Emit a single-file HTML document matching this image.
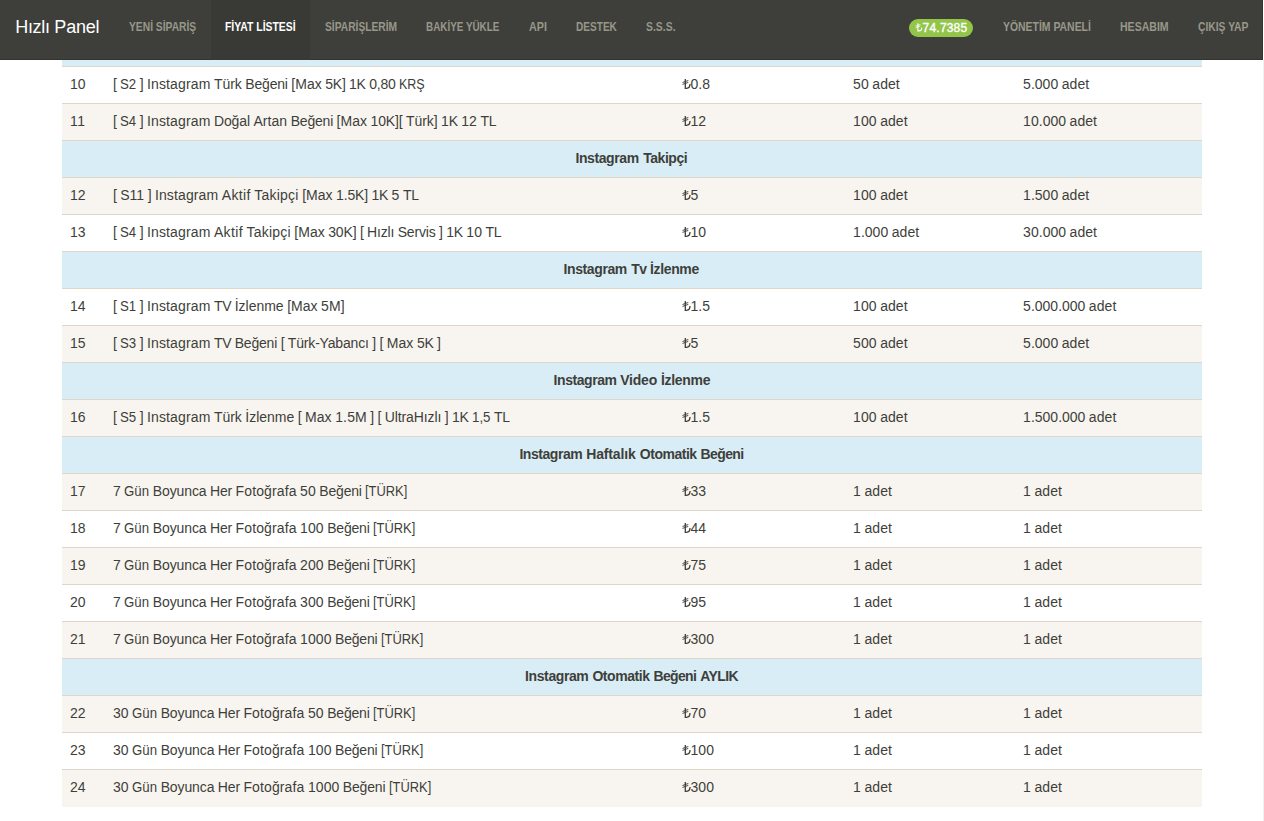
<!DOCTYPE html><html lang="tr"><head><meta charset="utf-8"><title>Fiyat Listesi</title><style>
*{box-sizing:border-box}
html,body{margin:0;padding:0}
body{width:1264px;height:821px;overflow:hidden;background:#fff;font-family:"Liberation Sans",sans-serif;font-size:14px;line-height:20px;color:#3e3f3a;position:relative}
.nav{position:absolute;left:0;top:0;width:1263px;height:60px;background:#3e3f3a;z-index:5;border-bottom:1px solid #33342f;border-right:1px solid #353631}
.edge{position:absolute;left:1263px;top:60px;width:1px;height:761px;background:#f1f1f1}
.brand{position:absolute;left:15px;top:0;height:60px;line-height:54px;font-size:18px;color:#fff;white-space:nowrap}
.nl{position:absolute;top:0;height:60px;line-height:54px;font-size:12px;font-weight:bold;color:#98978b;white-space:nowrap;padding:0 15px}
.nl.act{color:#fff}
.actbg{position:absolute;left:211px;top:0;width:99px;height:60px;background:#393a35}
.badge{position:absolute;left:909px;top:19px;width:64px;height:18px;border-radius:9px;background:#93c54b;color:#fff;font-size:12px;line-height:18px;font-weight:normal;-webkit-text-stroke:.35px #fff;white-space:nowrap;padding-left:7px;letter-spacing:.2px}
.badge .lira{width:6.6px;height:9.5px;vertical-align:-.5px}
table{position:absolute;left:62px;top:29px;width:1140px;border-collapse:collapse;border-spacing:0;table-layout:fixed}
td,th{padding:7px 8px 9px;height:37px;line-height:20px;border-top:1px solid #dfd7ca;text-align:left;white-space:nowrap;overflow:visible;vertical-align:top;font-weight:normal}
tr:nth-child(odd) td{background:#f8f5f0}
tr.info th{background:#d9edf7;text-align:center;font-weight:bold}
.sx{display:inline-block;transform-origin:0 50%}
.lira{display:inline-block;vertical-align:-1px;overflow:visible}
td.p{padding-left:8.5px}
i{font-style:normal}
.x{display:inline-block;transform-origin:0 0;white-space:nowrap}
th{position:relative}
.hw{position:absolute;top:7px}
td{word-spacing:-0.424px}
td.q{padding-left:7.1px}
</style></head><body>
<div class="nav"><div class="actbg"></div>
<div class="brand"><span id="brand" style="margin-left:.2px"><i style="letter-spacing:-.31px">Hızlı </i><i style="letter-spacing:-.21px">Panel</i></span></div>
<div class="nl" style="left:114px"><span id="n1" class="sx" style="transform:scaleX(0.8562);">YENİ SİPARİŞ</span></div>
<div class="nl act" style="left:211px"><span id="n2" class="sx" style="transform:scaleX(0.8685);margin-left:-0.8px;">FİYAT LİSTESİ</span></div>
<div class="nl" style="left:310px"><span id="n3" class="sx" style="transform:scaleX(0.8537);">SİPARİŞLERİM</span></div>
<div class="nl" style="left:412px"><span id="n4" class="sx" style="transform:scaleX(0.8233);margin-left:-0.8px;">BAKİYE YÜKLE</span></div>
<div class="nl" style="left:514px"><span id="n5" class="sx" style="transform:scaleX(0.8944);">API</span></div>
<div class="nl" style="left:561px"><span id="n6" class="sx" style="transform:scaleX(0.8404);">DESTEK</span></div>
<div class="nl" style="left:631px"><span id="n7" class="sx" style="transform:scaleX(0.8679);">S.S.S.</span></div>
<div class="badge"><span id="badge" style=""><svg class="lira" viewBox="0 0 8 11" width="8" height="11"><path d="M2.3 0V9.3H3.6C5.8 9.3 7 7.9 7 5.1" fill="none" stroke="currentColor" stroke-width="1.3"/><path d="M-.5 3.5L5.3 1.5M-.5 5.4L5.3 3.4" fill="none" stroke="currentColor" stroke-width=".95"/></svg>74.7385</span></div>
<div class="nl" style="left:988px"><span id="m1" class="sx" style="transform:scaleX(0.8690);">YÖNETİM PANELİ</span></div>
<div class="nl" style="left:1105px"><span id="m2" class="sx" style="transform:scaleX(0.8787);">HESABIM</span></div>
<div class="nl" style="left:1183px"><span id="m3" class="sx" style="transform:scaleX(0.8586);">ÇIKIŞ YAP</span></div>
</div>
<table><colgroup><col style="width:43px"><col style="width:569px"><col style="width:172px"><col style="width:170px"><col style="width:186px"></colgroup><tbody>
<tr class="info"><th colspan="5"><span id="h0" style=""><i id="h0w0">Instagram</i> <i id="h0w1">Beğeni</i></span></th></tr>
<tr><td><span id="a10"><i style="letter-spacing:0.08px">10</i></span></td><td><span id="b10"><i style="letter-spacing:-0.18px">[</i> <i class="x" style="width:16.17px;transform:scaleX(0.944)">S2</i> <i style="letter-spacing:-0.18px">]</i> <i style="letter-spacing:0.13px">Instagram</i> <i style="letter-spacing:-0.02px">Türk</i> <i style="letter-spacing:-0.18px">Beğeni</i> <i style="letter-spacing:0.04px">[Max</i> <i style="letter-spacing:-0.22px">5K]</i> <i style="letter-spacing:-0.24px">1K</i> <i style="letter-spacing:-0.23px">0,80</i> <i class="x" style="width:25.70px;transform:scaleX(0.893)">KRŞ</i></span></td><td class="p"><span id="c10"><svg class="lira" viewBox="0 0 8 11" width="8" height="11"><path d="M2.3 0V9.3H3.6C5.8 9.3 7 7.9 7 5.1" fill="none" stroke="currentColor" stroke-width="1.3"/><path d="M-.5 3.5L5.3 1.5M-.5 5.4L5.3 3.4" fill="none" stroke="currentColor" stroke-width=".95"/></svg><i style="letter-spacing:-0.02px">0.8</i></span></td><td class="q"><span id="d10"><i style="letter-spacing:0.08px">50</i> <i style="letter-spacing:0.06px">adet</i></span></td><td class="q"><span id="e10"><i style="letter-spacing:0.02px">5.000</i> <i style="letter-spacing:0.06px">adet</i></span></td></tr>
<tr><td><span id="a11"><i style="letter-spacing:0.59px">11</i></span></td><td><span id="b11"><i style="letter-spacing:-0.18px">[</i> <i class="x" style="width:16.17px;transform:scaleX(0.944)">S4</i> <i style="letter-spacing:-0.18px">]</i> <i style="letter-spacing:0.13px">Instagram</i> <i style="letter-spacing:-0.11px">Doğal</i> <i style="letter-spacing:0.06px">Artan</i> <i style="letter-spacing:-0.18px">Beğeni</i> <i style="letter-spacing:0.04px">[Max</i> <i style="letter-spacing:-0.15px">10K][</i> <i style="letter-spacing:-0.05px">Türk]</i> <i style="letter-spacing:-0.24px">1K</i> <i style="letter-spacing:0.08px">12</i> <i style="letter-spacing:-0.23px">TL</i></span></td><td class="p"><span id="c11"><svg class="lira" viewBox="0 0 8 11" width="8" height="11"><path d="M2.3 0V9.3H3.6C5.8 9.3 7 7.9 7 5.1" fill="none" stroke="currentColor" stroke-width="1.3"/><path d="M-.5 3.5L5.3 1.5M-.5 5.4L5.3 3.4" fill="none" stroke="currentColor" stroke-width=".95"/></svg><i style="letter-spacing:0.08px">12</i></span></td><td class="q"><span id="d11"><i style="letter-spacing:0.08px">100</i> <i style="letter-spacing:0.06px">adet</i></span></td><td class="q"><span id="e11"><i style="letter-spacing:0.03px">10.000</i> <i style="letter-spacing:0.06px">adet</i></span></td></tr>
<tr class="info"><th colspan="5"><i class="hw" id="h1w0" style="left:513.4px;letter-spacing:-0.40px">Instagram</i><i class="hw" id="h1w1" style="left:581.2px;letter-spacing:-0.46px">Takipçi</i>&nbsp;</th></tr>
<tr><td><span id="a12"><i style="letter-spacing:0.08px">12</i></span></td><td><span id="b12"><i style="letter-spacing:-0.18px">[</i> <i style="letter-spacing:0.05px">S11</i> <i style="letter-spacing:-0.18px">]</i> <i style="letter-spacing:0.13px">Instagram</i> <i style="letter-spacing:0.37px">Aktif</i> <i style="letter-spacing:0.22px">Takipçi</i> <i style="letter-spacing:0.04px">[Max</i> <i style="letter-spacing:-0.16px">1.5K]</i> <i style="letter-spacing:-0.24px">1K</i> <i style="letter-spacing:0.08px">5</i> <i style="letter-spacing:-0.23px">TL</i></span></td><td class="p"><span id="c12"><svg class="lira" viewBox="0 0 8 11" width="8" height="11"><path d="M2.3 0V9.3H3.6C5.8 9.3 7 7.9 7 5.1" fill="none" stroke="currentColor" stroke-width="1.3"/><path d="M-.5 3.5L5.3 1.5M-.5 5.4L5.3 3.4" fill="none" stroke="currentColor" stroke-width=".95"/></svg><i style="letter-spacing:0.08px">5</i></span></td><td class="q"><span id="d12"><i style="letter-spacing:0.08px">100</i> <i style="letter-spacing:0.06px">adet</i></span></td><td class="q"><span id="e12"><i style="letter-spacing:0.02px">1.500</i> <i style="letter-spacing:0.06px">adet</i></span></td></tr>
<tr><td><span id="a13"><i style="letter-spacing:0.08px">13</i></span></td><td><span id="b13"><i style="letter-spacing:-0.18px">[</i> <i class="x" style="width:16.17px;transform:scaleX(0.944)">S4</i> <i style="letter-spacing:-0.18px">]</i> <i style="letter-spacing:0.13px">Instagram</i> <i style="letter-spacing:0.37px">Aktif</i> <i style="letter-spacing:0.22px">Takipçi</i> <i style="letter-spacing:0.04px">[Max</i> <i style="letter-spacing:-0.15px">30K]</i> <i style="letter-spacing:-0.18px">[</i> <i style="letter-spacing:-0.18px">Hızlı</i> <i style="letter-spacing:-0.17px">Servis</i> <i style="letter-spacing:-0.18px">]</i> <i style="letter-spacing:-0.24px">1K</i> <i style="letter-spacing:0.08px">10</i> <i style="letter-spacing:-0.23px">TL</i></span></td><td class="p"><span id="c13"><svg class="lira" viewBox="0 0 8 11" width="8" height="11"><path d="M2.3 0V9.3H3.6C5.8 9.3 7 7.9 7 5.1" fill="none" stroke="currentColor" stroke-width="1.3"/><path d="M-.5 3.5L5.3 1.5M-.5 5.4L5.3 3.4" fill="none" stroke="currentColor" stroke-width=".95"/></svg><i style="letter-spacing:0.08px">10</i></span></td><td class="q"><span id="d13"><i style="letter-spacing:0.02px">1.000</i> <i style="letter-spacing:0.06px">adet</i></span></td><td class="q"><span id="e13"><i style="letter-spacing:0.03px">30.000</i> <i style="letter-spacing:0.06px">adet</i></span></td></tr>
<tr class="info"><th colspan="5"><i class="hw" id="h2w0" style="left:501.5px;letter-spacing:-0.39px">Instagram</i><i class="hw" id="h2w1" style="left:569.3px;letter-spacing:-0.58px">Tv</i><i class="hw" id="h2w2" style="left:588.1px;letter-spacing:-0.38px">İzlenme</i>&nbsp;</th></tr>
<tr><td><span id="a14"><i style="letter-spacing:0.08px">14</i></span></td><td><span id="b14"><i style="letter-spacing:-0.18px">[</i> <i class="x" style="width:16.17px;transform:scaleX(0.944)">S1</i> <i style="letter-spacing:-0.18px">]</i> <i style="letter-spacing:0.13px">Instagram</i> <i style="letter-spacing:-0.31px">TV</i> İzlenme <i style="letter-spacing:0.04px">[Max</i> <i style="letter-spacing:0.15px">5M]</i></span></td><td class="p"><span id="c14"><svg class="lira" viewBox="0 0 8 11" width="8" height="11"><path d="M2.3 0V9.3H3.6C5.8 9.3 7 7.9 7 5.1" fill="none" stroke="currentColor" stroke-width="1.3"/><path d="M-.5 3.5L5.3 1.5M-.5 5.4L5.3 3.4" fill="none" stroke="currentColor" stroke-width=".95"/></svg><i style="letter-spacing:-0.02px">1.5</i></span></td><td class="q"><span id="d14"><i style="letter-spacing:0.08px">100</i> <i style="letter-spacing:0.06px">adet</i></span></td><td class="q"><span id="e14">5.000.000 <i style="letter-spacing:0.06px">adet</i></span></td></tr>
<tr><td><span id="a15"><i style="letter-spacing:0.08px">15</i></span></td><td><span id="b15"><i style="letter-spacing:-0.18px">[</i> <i class="x" style="width:16.17px;transform:scaleX(0.944)">S3</i> <i style="letter-spacing:-0.18px">]</i> <i style="letter-spacing:0.13px">Instagram</i> <i style="letter-spacing:-0.31px">TV</i> <i style="letter-spacing:-0.18px">Beğeni</i> <i style="letter-spacing:-0.18px">[</i> <i style="letter-spacing:-0.17px">Türk-Yabancı</i> <i style="letter-spacing:-0.18px">]</i> <i style="letter-spacing:-0.18px">[</i> <i style="letter-spacing:0.11px">Max</i> <i style="letter-spacing:-0.24px">5K</i> <i style="letter-spacing:-0.18px">]</i></span></td><td class="p"><span id="c15"><svg class="lira" viewBox="0 0 8 11" width="8" height="11"><path d="M2.3 0V9.3H3.6C5.8 9.3 7 7.9 7 5.1" fill="none" stroke="currentColor" stroke-width="1.3"/><path d="M-.5 3.5L5.3 1.5M-.5 5.4L5.3 3.4" fill="none" stroke="currentColor" stroke-width=".95"/></svg><i style="letter-spacing:0.08px">5</i></span></td><td class="q"><span id="d15"><i style="letter-spacing:0.08px">500</i> <i style="letter-spacing:0.06px">adet</i></span></td><td class="q"><span id="e15"><i style="letter-spacing:0.02px">5.000</i> <i style="letter-spacing:0.06px">adet</i></span></td></tr>
<tr class="info"><th colspan="5"><i class="hw" id="h3w0" style="left:491.6px;letter-spacing:-0.43px">Instagram</i><i class="hw" id="h3w1" style="left:558.2px;letter-spacing:-0.20px">Video</i><i class="hw" id="h3w2" style="left:599.0px;letter-spacing:-0.32px">İzlenme</i>&nbsp;</th></tr>
<tr><td><span id="a16"><i style="letter-spacing:0.08px">16</i></span></td><td><span id="b16"><i style="letter-spacing:-0.18px">[</i> <i class="x" style="width:16.17px;transform:scaleX(0.944)">S5</i> <i style="letter-spacing:-0.18px">]</i> <i style="letter-spacing:0.13px">Instagram</i> <i style="letter-spacing:-0.02px">Türk</i> İzlenme <i style="letter-spacing:-0.18px">[</i> <i style="letter-spacing:0.11px">Max</i> <i style="letter-spacing:0.13px">1.5M</i> <i style="letter-spacing:-0.18px">]</i> <i style="letter-spacing:-0.18px">[</i> <i style="letter-spacing:-0.10px">UltraHızlı</i> <i style="letter-spacing:-0.18px">]</i> <i style="letter-spacing:-0.24px">1K</i> <i class="x" style="width:18.47px;transform:scaleX(0.949)">1,5</i> <i style="letter-spacing:-0.23px">TL</i></span></td><td class="p"><span id="c16"><svg class="lira" viewBox="0 0 8 11" width="8" height="11"><path d="M2.3 0V9.3H3.6C5.8 9.3 7 7.9 7 5.1" fill="none" stroke="currentColor" stroke-width="1.3"/><path d="M-.5 3.5L5.3 1.5M-.5 5.4L5.3 3.4" fill="none" stroke="currentColor" stroke-width=".95"/></svg><i style="letter-spacing:-0.02px">1.5</i></span></td><td class="q"><span id="d16"><i style="letter-spacing:0.08px">100</i> <i style="letter-spacing:0.06px">adet</i></span></td><td class="q"><span id="e16">1.500.000 <i style="letter-spacing:0.06px">adet</i></span></td></tr>
<tr class="info"><th colspan="5"><i class="hw" id="h4w0" style="left:457.4px;letter-spacing:-0.45px">Instagram</i><i class="hw" id="h4w1" style="left:524.2px;letter-spacing:-0.14px">Haftalık</i><i class="hw" id="h4w2" style="left:577.8px;letter-spacing:-0.48px">Otomatik</i><i class="hw" id="h4w3" style="left:638.4px;letter-spacing:-0.57px">Beğeni</i>&nbsp;</th></tr>
<tr><td><span id="a17"><i style="letter-spacing:0.08px">17</i></span></td><td><span id="b17"><i style="letter-spacing:0.08px">7</i> <i class="x" style="width:24.98px;transform:scaleX(0.944)">Gün</i> <i style="letter-spacing:-0.11px">Boyunca</i> <i style="letter-spacing:-0.14px">Her</i> <i style="letter-spacing:0.12px">Fotoğrafa</i> <i style="letter-spacing:0.08px">50</i> <i style="letter-spacing:-0.18px">Beğeni</i> <i class="x" style="width:42.25px;transform:scaleX(0.921)">[TÜRK]</i></span></td><td class="p"><span id="c17"><svg class="lira" viewBox="0 0 8 11" width="8" height="11"><path d="M2.3 0V9.3H3.6C5.8 9.3 7 7.9 7 5.1" fill="none" stroke="currentColor" stroke-width="1.3"/><path d="M-.5 3.5L5.3 1.5M-.5 5.4L5.3 3.4" fill="none" stroke="currentColor" stroke-width=".95"/></svg><i style="letter-spacing:0.08px">33</i></span></td><td class="q"><span id="d17"><i style="letter-spacing:0.08px">1</i> <i style="letter-spacing:0.06px">adet</i></span></td><td class="q"><span id="e17"><i style="letter-spacing:0.08px">1</i> <i style="letter-spacing:0.06px">adet</i></span></td></tr>
<tr><td><span id="a18"><i style="letter-spacing:0.08px">18</i></span></td><td><span id="b18"><i style="letter-spacing:0.08px">7</i> <i class="x" style="width:24.98px;transform:scaleX(0.944)">Gün</i> <i style="letter-spacing:-0.11px">Boyunca</i> <i style="letter-spacing:-0.14px">Her</i> <i style="letter-spacing:0.12px">Fotoğrafa</i> <i style="letter-spacing:0.08px">100</i> <i style="letter-spacing:-0.18px">Beğeni</i> <i class="x" style="width:42.25px;transform:scaleX(0.921)">[TÜRK]</i></span></td><td class="p"><span id="c18"><svg class="lira" viewBox="0 0 8 11" width="8" height="11"><path d="M2.3 0V9.3H3.6C5.8 9.3 7 7.9 7 5.1" fill="none" stroke="currentColor" stroke-width="1.3"/><path d="M-.5 3.5L5.3 1.5M-.5 5.4L5.3 3.4" fill="none" stroke="currentColor" stroke-width=".95"/></svg><i style="letter-spacing:0.08px">44</i></span></td><td class="q"><span id="d18"><i style="letter-spacing:0.08px">1</i> <i style="letter-spacing:0.06px">adet</i></span></td><td class="q"><span id="e18"><i style="letter-spacing:0.08px">1</i> <i style="letter-spacing:0.06px">adet</i></span></td></tr>
<tr><td><span id="a19"><i style="letter-spacing:0.08px">19</i></span></td><td><span id="b19"><i style="letter-spacing:0.08px">7</i> <i class="x" style="width:24.98px;transform:scaleX(0.944)">Gün</i> <i style="letter-spacing:-0.11px">Boyunca</i> <i style="letter-spacing:-0.14px">Her</i> <i style="letter-spacing:0.12px">Fotoğrafa</i> <i style="letter-spacing:0.08px">200</i> <i style="letter-spacing:-0.18px">Beğeni</i> <i class="x" style="width:42.25px;transform:scaleX(0.921)">[TÜRK]</i></span></td><td class="p"><span id="c19"><svg class="lira" viewBox="0 0 8 11" width="8" height="11"><path d="M2.3 0V9.3H3.6C5.8 9.3 7 7.9 7 5.1" fill="none" stroke="currentColor" stroke-width="1.3"/><path d="M-.5 3.5L5.3 1.5M-.5 5.4L5.3 3.4" fill="none" stroke="currentColor" stroke-width=".95"/></svg><i style="letter-spacing:0.08px">75</i></span></td><td class="q"><span id="d19"><i style="letter-spacing:0.08px">1</i> <i style="letter-spacing:0.06px">adet</i></span></td><td class="q"><span id="e19"><i style="letter-spacing:0.08px">1</i> <i style="letter-spacing:0.06px">adet</i></span></td></tr>
<tr><td><span id="a20"><i style="letter-spacing:0.08px">20</i></span></td><td><span id="b20"><i style="letter-spacing:0.08px">7</i> <i class="x" style="width:24.98px;transform:scaleX(0.944)">Gün</i> <i style="letter-spacing:-0.11px">Boyunca</i> <i style="letter-spacing:-0.14px">Her</i> <i style="letter-spacing:0.12px">Fotoğrafa</i> <i style="letter-spacing:0.08px">300</i> <i style="letter-spacing:-0.18px">Beğeni</i> <i class="x" style="width:42.25px;transform:scaleX(0.921)">[TÜRK]</i></span></td><td class="p"><span id="c20"><svg class="lira" viewBox="0 0 8 11" width="8" height="11"><path d="M2.3 0V9.3H3.6C5.8 9.3 7 7.9 7 5.1" fill="none" stroke="currentColor" stroke-width="1.3"/><path d="M-.5 3.5L5.3 1.5M-.5 5.4L5.3 3.4" fill="none" stroke="currentColor" stroke-width=".95"/></svg><i style="letter-spacing:0.08px">95</i></span></td><td class="q"><span id="d20"><i style="letter-spacing:0.08px">1</i> <i style="letter-spacing:0.06px">adet</i></span></td><td class="q"><span id="e20"><i style="letter-spacing:0.08px">1</i> <i style="letter-spacing:0.06px">adet</i></span></td></tr>
<tr><td><span id="a21"><i style="letter-spacing:0.08px">21</i></span></td><td><span id="b21"><i style="letter-spacing:0.08px">7</i> <i class="x" style="width:24.98px;transform:scaleX(0.944)">Gün</i> <i style="letter-spacing:-0.11px">Boyunca</i> <i style="letter-spacing:-0.14px">Her</i> <i style="letter-spacing:0.12px">Fotoğrafa</i> <i style="letter-spacing:0.08px">1000</i> <i style="letter-spacing:-0.18px">Beğeni</i> <i class="x" style="width:42.25px;transform:scaleX(0.921)">[TÜRK]</i></span></td><td class="p"><span id="c21"><svg class="lira" viewBox="0 0 8 11" width="8" height="11"><path d="M2.3 0V9.3H3.6C5.8 9.3 7 7.9 7 5.1" fill="none" stroke="currentColor" stroke-width="1.3"/><path d="M-.5 3.5L5.3 1.5M-.5 5.4L5.3 3.4" fill="none" stroke="currentColor" stroke-width=".95"/></svg><i style="letter-spacing:0.08px">300</i></span></td><td class="q"><span id="d21"><i style="letter-spacing:0.08px">1</i> <i style="letter-spacing:0.06px">adet</i></span></td><td class="q"><span id="e21"><i style="letter-spacing:0.08px">1</i> <i style="letter-spacing:0.06px">adet</i></span></td></tr>
<tr class="info"><th colspan="5"><i class="hw" id="h5w0" style="left:463.1px;letter-spacing:-0.40px">Instagram</i><i class="hw" id="h5w1" style="left:530.4px;letter-spacing:-0.45px">Otomatik</i><i class="hw" id="h5w2" style="left:591.5px;letter-spacing:-0.68px">Beğeni</i><i class="hw" id="h5w3" style="left:638.3px;letter-spacing:-0.60px">AYLIK</i>&nbsp;</th></tr>
<tr><td><span id="a22"><i style="letter-spacing:0.08px">22</i></span></td><td><span id="b22"><i style="letter-spacing:0.08px">30</i> <i class="x" style="width:24.98px;transform:scaleX(0.944)">Gün</i> <i style="letter-spacing:-0.11px">Boyunca</i> <i style="letter-spacing:-0.14px">Her</i> <i style="letter-spacing:0.12px">Fotoğrafa</i> <i style="letter-spacing:0.08px">50</i> <i style="letter-spacing:-0.18px">Beğeni</i> <i class="x" style="width:42.25px;transform:scaleX(0.921)">[TÜRK]</i></span></td><td class="p"><span id="c22"><svg class="lira" viewBox="0 0 8 11" width="8" height="11"><path d="M2.3 0V9.3H3.6C5.8 9.3 7 7.9 7 5.1" fill="none" stroke="currentColor" stroke-width="1.3"/><path d="M-.5 3.5L5.3 1.5M-.5 5.4L5.3 3.4" fill="none" stroke="currentColor" stroke-width=".95"/></svg><i style="letter-spacing:0.08px">70</i></span></td><td class="q"><span id="d22"><i style="letter-spacing:0.08px">1</i> <i style="letter-spacing:0.06px">adet</i></span></td><td class="q"><span id="e22"><i style="letter-spacing:0.08px">1</i> <i style="letter-spacing:0.06px">adet</i></span></td></tr>
<tr><td><span id="a23"><i style="letter-spacing:0.08px">23</i></span></td><td><span id="b23"><i style="letter-spacing:0.08px">30</i> <i class="x" style="width:24.98px;transform:scaleX(0.944)">Gün</i> <i style="letter-spacing:-0.11px">Boyunca</i> <i style="letter-spacing:-0.14px">Her</i> <i style="letter-spacing:0.12px">Fotoğrafa</i> <i style="letter-spacing:0.08px">100</i> <i style="letter-spacing:-0.18px">Beğeni</i> <i class="x" style="width:42.25px;transform:scaleX(0.921)">[TÜRK]</i></span></td><td class="p"><span id="c23"><svg class="lira" viewBox="0 0 8 11" width="8" height="11"><path d="M2.3 0V9.3H3.6C5.8 9.3 7 7.9 7 5.1" fill="none" stroke="currentColor" stroke-width="1.3"/><path d="M-.5 3.5L5.3 1.5M-.5 5.4L5.3 3.4" fill="none" stroke="currentColor" stroke-width=".95"/></svg><i style="letter-spacing:0.08px">100</i></span></td><td class="q"><span id="d23"><i style="letter-spacing:0.08px">1</i> <i style="letter-spacing:0.06px">adet</i></span></td><td class="q"><span id="e23"><i style="letter-spacing:0.08px">1</i> <i style="letter-spacing:0.06px">adet</i></span></td></tr>
<tr><td><span id="a24"><i style="letter-spacing:0.08px">24</i></span></td><td><span id="b24"><i style="letter-spacing:0.08px">30</i> <i class="x" style="width:24.98px;transform:scaleX(0.944)">Gün</i> <i style="letter-spacing:-0.11px">Boyunca</i> <i style="letter-spacing:-0.14px">Her</i> <i style="letter-spacing:0.12px">Fotoğrafa</i> <i style="letter-spacing:0.08px">1000</i> <i style="letter-spacing:-0.18px">Beğeni</i> <i class="x" style="width:42.25px;transform:scaleX(0.921)">[TÜRK]</i></span></td><td class="p"><span id="c24"><svg class="lira" viewBox="0 0 8 11" width="8" height="11"><path d="M2.3 0V9.3H3.6C5.8 9.3 7 7.9 7 5.1" fill="none" stroke="currentColor" stroke-width="1.3"/><path d="M-.5 3.5L5.3 1.5M-.5 5.4L5.3 3.4" fill="none" stroke="currentColor" stroke-width=".95"/></svg><i style="letter-spacing:0.08px">300</i></span></td><td class="q"><span id="d24"><i style="letter-spacing:0.08px">1</i> <i style="letter-spacing:0.06px">adet</i></span></td><td class="q"><span id="e24"><i style="letter-spacing:0.08px">1</i> <i style="letter-spacing:0.06px">adet</i></span></td></tr>
</tbody></table><div class="edge"></div></body></html>
